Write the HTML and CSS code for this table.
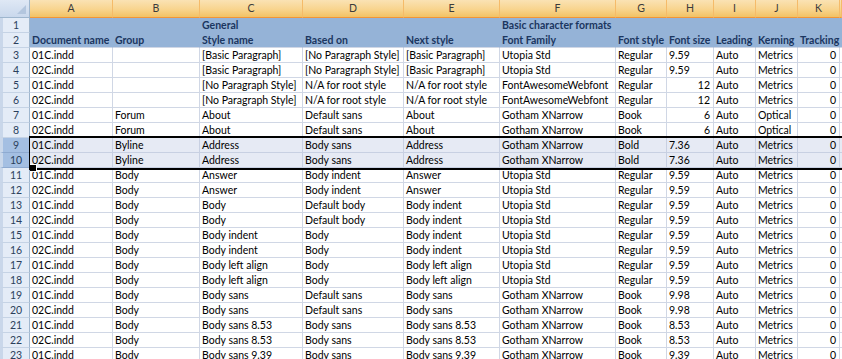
FILE: index.html
```html
<!DOCTYPE html>
<html lang="en">
<head>
  <meta charset="UTF-8">
  <title>Paragraph styles - Book1</title>
  <link rel="stylesheet" href="styles.css">
</head>
<body>
  <div class="sheet" id="sheet"></div>

  <script>
    const sheet = document.getElementById("sheet");
    // last column is only a sliver at the window edge
    const letters = ["A", "B", "C", "D", "E", "F", "G", "H", "I", "J", "K", ""];

    // right-aligned columns hold real numbers, the rest is text
    const rows = [
      ["01C.indd", "", "[Basic Paragraph]", "[No Paragraph Style]", "[Basic Paragraph]", "Utopia Std", "Regular", "9.59", "Auto", "Metrics", 0],
      ["02C.indd", "", "[Basic Paragraph]", "[No Paragraph Style]", "[Basic Paragraph]", "Utopia Std", "Regular", "9.59", "Auto", "Metrics", 0],
      ["01C.indd", "", "[No Paragraph Style]", "N/A for root style", "N/A for root style", "FontAwesomeWebfont", "Regular", 12, "Auto", "Metrics", 0],
      ["02C.indd", "", "[No Paragraph Style]", "N/A for root style", "N/A for root style", "FontAwesomeWebfont", "Regular", 12, "Auto", "Metrics", 0],
      ["01C.indd", "Forum", "About", "Default sans", "About", "Gotham XNarrow", "Book", 6, "Auto", "Optical", 0],
      ["02C.indd", "Forum", "About", "Default sans", "About", "Gotham XNarrow", "Book", 6, "Auto", "Optical", 0],
      ["01C.indd", "Byline", "Address", "Body sans", "Address", "Gotham XNarrow", "Bold", "7.36", "Auto", "Metrics", 0],
      ["02C.indd", "Byline", "Address", "Body sans", "Address", "Gotham XNarrow", "Bold", "7.36", "Auto", "Metrics", 0],
      ["01C.indd", "Body", "Answer", "Body indent", "Answer", "Utopia Std", "Regular", "9.59", "Auto", "Metrics", 0],
      ["02C.indd", "Body", "Answer", "Body indent", "Answer", "Utopia Std", "Regular", "9.59", "Auto", "Metrics", 0],
      ["01C.indd", "Body", "Body", "Default body", "Body indent", "Utopia Std", "Regular", "9.59", "Auto", "Metrics", 0],
      ["02C.indd", "Body", "Body", "Default body", "Body indent", "Utopia Std", "Regular", "9.59", "Auto", "Metrics", 0],
      ["01C.indd", "Body", "Body indent", "Body", "Body indent", "Utopia Std", "Regular", "9.59", "Auto", "Metrics", 0],
      ["02C.indd", "Body", "Body indent", "Body", "Body indent", "Utopia Std", "Regular", "9.59", "Auto", "Metrics", 0],
      ["01C.indd", "Body", "Body left align", "Body", "Body left align", "Utopia Std", "Regular", "9.59", "Auto", "Metrics", 0],
      ["02C.indd", "Body", "Body left align", "Body", "Body left align", "Utopia Std", "Regular", "9.59", "Auto", "Metrics", 0],
      ["01C.indd", "Body", "Body sans", "Default sans", "Body sans", "Gotham XNarrow", "Book", "9.98", "Auto", "Metrics", 0],
      ["02C.indd", "Body", "Body sans", "Default sans", "Body sans", "Gotham XNarrow", "Book", "9.98", "Auto", "Metrics", 0],
      ["01C.indd", "Body", "Body sans 8.53", "Body sans", "Body sans 8.53", "Gotham XNarrow", "Book", "8.53", "Auto", "Metrics", 0],
      ["02C.indd", "Body", "Body sans 8.53", "Body sans", "Body sans 8.53", "Gotham XNarrow", "Book", "8.53", "Auto", "Metrics", 0],
      ["01C.indd", "Body", "Body sans 9.39", "Body sans", "Body sans 9.39", "Gotham XNarrow", "Book", "9.39", "Auto", "Metrics", 0]
    ];

    function makeRow(cls, head, cells) {
      const row = document.createElement("div");
      row.className = "row " + cls;
      row.innerHTML = `<div class="rh">${head}</div>` + cells.map(c => {
        const num = typeof c === "number";
        return `<div class="cell${num ? " num" : ""}">${c}</div>`;
      }).join("");
      return row;
    }

    // column letters
    const headRow = document.createElement("div");
    headRow.className = "row heads";
    headRow.innerHTML = `<div class="corner"></div>` + letters.map(l => `<div class="ch">${l}</div>`).join("");
    sheet.appendChild(headRow);

    sheet.appendChild(makeRow("band", 1, ["", "", "General", "", "", "Basic character formats", "", "", "", "", "", ""]));
    sheet.appendChild(makeRow("band last", 2, ["Document name", "Group", "Style name", "Based on", "Next style", "Font Family", "Font style", "Font size", "Leading", "Kerning", "Tracking", ""]));

    let sel = null;
    rows.forEach((r, i) => {
      const n = i + 3;
      const isSel = n === 9 || n === 10;
      const row = makeRow(isSel ? "data picked" : "data", n, r.concat([""]));
      if (isSel) {
        if (!sel) {
          sel = document.createElement("div");
          sel.className = "selection";
          sheet.appendChild(sel);
        }
        sel.appendChild(row);
      } else {
        sheet.appendChild(row);
      }
    });
  </script>
</body>
</html>
```

FILE: styles.css
```css
* {
  box-sizing: border-box;
  margin: 0;
  padding: 0;
}

body {
  font-family: 'Lato', 'Liberation Sans', sans-serif;
  font-size: 10.5px;
  color: #000;
  background: #fff;
  overflow: hidden;
}

.sheet {
  display: flex;
  flex-direction: column;
  width: 842px;
}

.row {
  display: grid;
  grid-template-columns: 30px 83px 87px 103px 101px 96px 116px 51px 47px 42px 42px 42px 1fr;
  height: 15px;
  flex-shrink: 0;
}

/* column letters */
.heads {
  height: 18px;
}

.corner {
  position: relative;
  background: linear-gradient(#dfe8f5, #c9d8ec);
  border-right: 1px solid #9eb6ce;
  border-bottom: 1px solid #9eb6ce;
}

.corner::after {
  content: "";
  position: absolute;
  right: 3px;
  bottom: 3px;
  border-left: 9px solid transparent;
  border-bottom: 9px solid #b3c6de;
}

.ch {
  background: linear-gradient(#fae2b4, #f8d48e 55%, #f2c264);
  border-right: 1px solid #f5bb69;
  border-bottom: 1px solid #f29536;
  text-align: center;
  line-height: 17px;
  color: #3b3b3b;
}

/* row numbers */
.rh {
  background: #e4ecf7;
  border-right: 1px solid #9eb6ce;
  border-bottom: 1px solid #c5d3e5;
  border-left: 3px solid #c9d7ea;
  text-align: center;
  line-height: 14px;
  color: #2b3f5c;
}

.cell {
  padding: 0 2px;
  white-space: nowrap;
  line-height: 14px;
  border-right: 1px solid #d0d7e5;
  border-bottom: 1px solid #d0d7e5;
}

.num {
  text-align: right;
  padding-right: 3px;
}

.band {
  background: #95b3d7;
}

.band .cell {
  border-color: #95b3d7;
  font-weight: 700;
  color: #1b3660;
}

.band.last .cell {
  border-bottom-color: #d0d7e5;
}

.data {
  background: #fff;
}

.picked {
  background: #e6eaf4;
}

.picked .cell {
  border-color: #c8d0e2;
}

.picked .rh {
  background: #a4bfe2;
  border-bottom-color: #8eaad0;
}

.selection {
  position: relative;
  display: flex;
  flex-direction: column;
  flex-shrink: 0;
}

.selection::after {
  content: "";
  position: absolute;
  left: 29px;
  right: 0;
  top: -2px;
  bottom: -2px;
  border: 2px solid #000;
  border-left-width: 1px;
  border-right: none;
}

.selection::before {
  content: "";
  position: absolute;
  left: 30px;
  bottom: -4px;
  width: 6px;
  height: 6px;
  background: #000;
  border: 1px solid #fff;
  border-left: none;
  z-index: 1;
}
```
